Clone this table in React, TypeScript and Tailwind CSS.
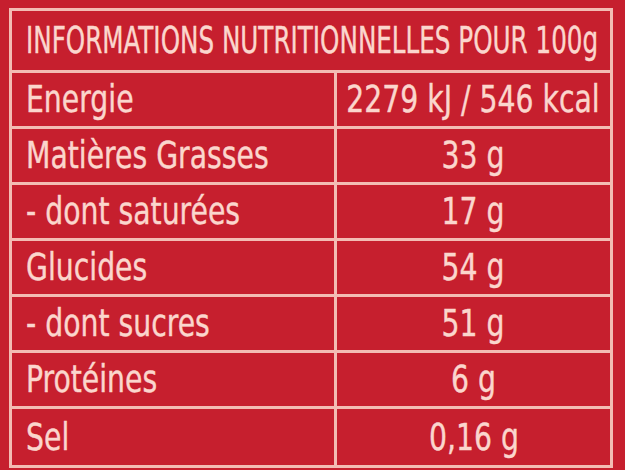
const rows: { label: string; value: string }[] = [
  { label: "Energie", value: "2279 kJ / 546 kcal" },
  { label: "Matières Grasses", value: "33 g" },
  { label: "- dont saturées", value: "17 g" },
  { label: "Glucides", value: "54 g" },
  { label: "- dont sucres", value: "51 g" },
  { label: "Protéines", value: "6 g" },
  { label: "Sel", value: "0,16 g" },
];

export default function App() {
  return (
    <div
      className="w-[625px] h-[470px] bg-[#c61f2e] pt-[8px] pl-[9px] text-[#fbd6cd] overflow-hidden [-webkit-text-stroke:0.4px_currentColor]"
      style={{ fontFamily: '"DejaVu Sans Condensed", "DejaVu Sans", sans-serif' }}
    >
      <div className="w-[604px] border-[3px] border-[#f3bcb4]">
        <div className="h-[62px] border-b-[3px] border-[#f3bcb4] flex items-center pl-[14px] text-[37px] leading-none">
          <span className="inline-block whitespace-nowrap origin-left scale-x-[0.74]">
            INFORMATIONS NUTRITIONNELLES POUR 100g
          </span>
        </div>
        {rows.map((row, i) => (
          <div
            key={row.label}
            className={
              "grid grid-cols-[325px_minmax(0,1fr)] h-[56px] " +
              (i < rows.length - 1 ? "border-b-[3px] border-[#f3bcb4]" : "")
            }
          >
            <div className="border-r-[3px] border-[#f3bcb4] flex items-center pl-[14px] text-[37px] leading-none">
              <span className="inline-block whitespace-nowrap origin-left scale-x-[0.85]">{row.label}</span>
            </div>
            <div className="flex items-center justify-center text-[37px] leading-none">
              <span className="inline-block shrink-0 whitespace-nowrap scale-x-[0.85]">{row.value}</span>
            </div>
          </div>
        ))}
      </div>
    </div>
  );
}
